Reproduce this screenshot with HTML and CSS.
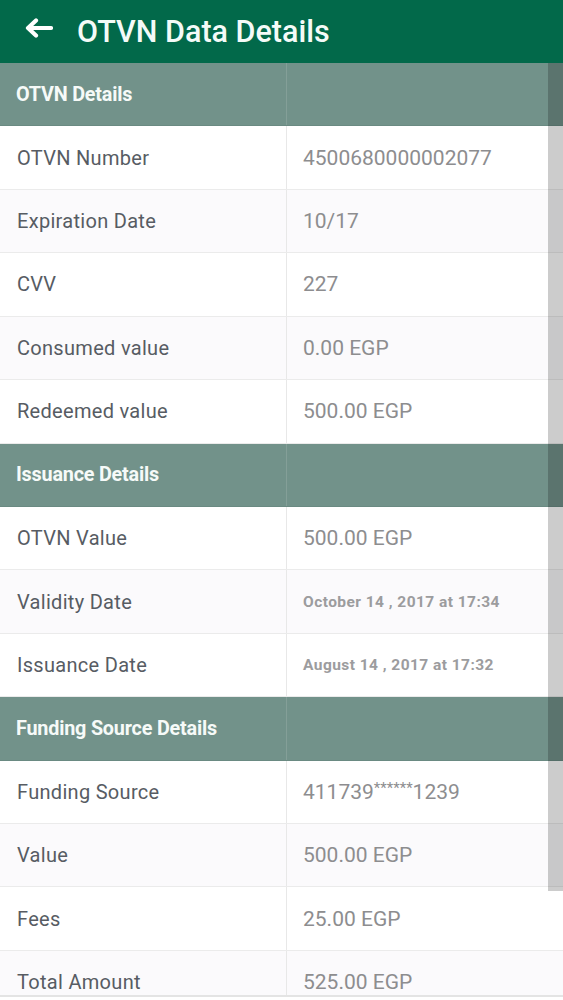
FILE: index.html
```html
<!DOCTYPE html>
<html>
<head>
<meta charset="utf-8">
<link rel="stylesheet" href="styles.css">
</head>
<body>
<div class="screen">
  <header class="appbar">
    <svg class="back" viewBox="0 0 30 22" width="30" height="22"><path d="M5 11H28M13 3.5L5 11L13 18.5" fill="none" stroke="#fff" stroke-width="4.2" stroke-linecap="round" stroke-linejoin="round"/></svg>
    <h1 class="title">OTVN Data Details</h1>
  </header>
  <div class="table">
    <div class="row section"><div class="cell">OTVN Details</div><div class="cell"></div></div>
    <div class="row"><div class="cell label">OTVN Number</div><div class="cell value">4500680000002077</div></div>
    <div class="row alt"><div class="cell label">Expiration Date</div><div class="cell value">10/17</div></div>
    <div class="row"><div class="cell label">CVV</div><div class="cell value">227</div></div>
    <div class="row alt"><div class="cell label">Consumed value</div><div class="cell value">0.00 EGP</div></div>
    <div class="row"><div class="cell label">Redeemed value</div><div class="cell value">500.00 EGP</div></div>
    <div class="row section"><div class="cell">Issuance Details</div><div class="cell"></div></div>
    <div class="row"><div class="cell label">OTVN Value</div><div class="cell value">500.00 EGP</div></div>
    <div class="row alt"><div class="cell label">Validity Date</div><div class="cell value small">October 14 , 2017 at 17:34</div></div>
    <div class="row"><div class="cell label">Issuance Date</div><div class="cell value small">August 14 , 2017 at 17:32</div></div>
    <div class="row section"><div class="cell">Funding Source Details</div><div class="cell"></div></div>
    <div class="row"><div class="cell label">Funding Source</div><div class="cell value">411739<span class="stars">******</span>1239</div></div>
    <div class="row alt"><div class="cell label">Value</div><div class="cell value">500.00 EGP</div></div>
    <div class="row"><div class="cell label">Fees</div><div class="cell value">25.00 EGP</div></div>
    <div class="row alt last"><div class="cell label">Total Amount</div><div class="cell value">525.00 EGP</div></div>
  </div>
  <div class="scrollbar"></div>
</div>
</body>
</html>
```
FILE: styles.css
```css
html, body {
  margin: 0;
  padding: 0;
  background: #ffffff;
}
body {
  font-family: Roboto, "Noto Sans", "Liberation Sans", sans-serif;
}
.screen {
  position: relative;
  width: 563px;
  height: 1000px;
  overflow: hidden;
  background: #ffffff;
}
.appbar {
  height: 63px;
  background: #02694a;
  display: flex;
  align-items: center;
  padding-left: 23px;
  box-sizing: border-box;
  gap: 24px;
}
.back {
  display: block;
  margin-top: -7px;
}
.title {
  margin: 0;
  color: #f4fbf8;
  font-size: 30.5px;
  font-weight: 500;
  letter-spacing: 0;
}
.table {
  display: flex;
  flex-direction: column;
}
.row {
  display: grid;
  grid-template-columns: 287px 1fr;
  height: 63.43px;
  box-sizing: border-box;
  border-bottom: 1px solid #ebebeb;
  background: #ffffff;
}
.row.alt {
  background: #fbfafc;
}
.row.last {
  height: 46px;
  border-bottom: 2px solid #e4e4e4;
}
.cell {
  display: flex;
  align-items: center;
  padding-left: 17px;
  box-sizing: border-box;
}
.cell:first-child {
  border-right: 1px solid #e8e8e8;
}
.row.last .cell {
  align-items: flex-end;
  padding-bottom: 1px;
}
.row.section {
  background: #72928a;
  border-bottom: 1px solid #6a8a82;
}
.row.section .cell {
  color: #f6faf8;
  font-size: 19.8px;
  font-weight: 700;
  letter-spacing: -0.2px;
  padding-left: 16px;
}
.row.section .cell:first-child {
  border-right: 1px solid #849f98;
}
.label {
  color: #575c63;
  font-size: 20px;
  letter-spacing: 0.3px;
}
.value {
  color: #8d8d8f;
  font-size: 21px;
  padding-left: 16px;
}
.value.small {
  font-size: 15.5px;
  font-weight: 700;
  letter-spacing: 0.45px;
  color: #9c9c9e;
}
.stars {
  font-size: 15px;
  position: relative;
  top: -4px;
}
.scrollbar {
  position: absolute;
  right: 0;
  top: 63px;
  width: 15px;
  height: 828px;
  background: rgba(0, 0, 0, 0.2);
}
```
